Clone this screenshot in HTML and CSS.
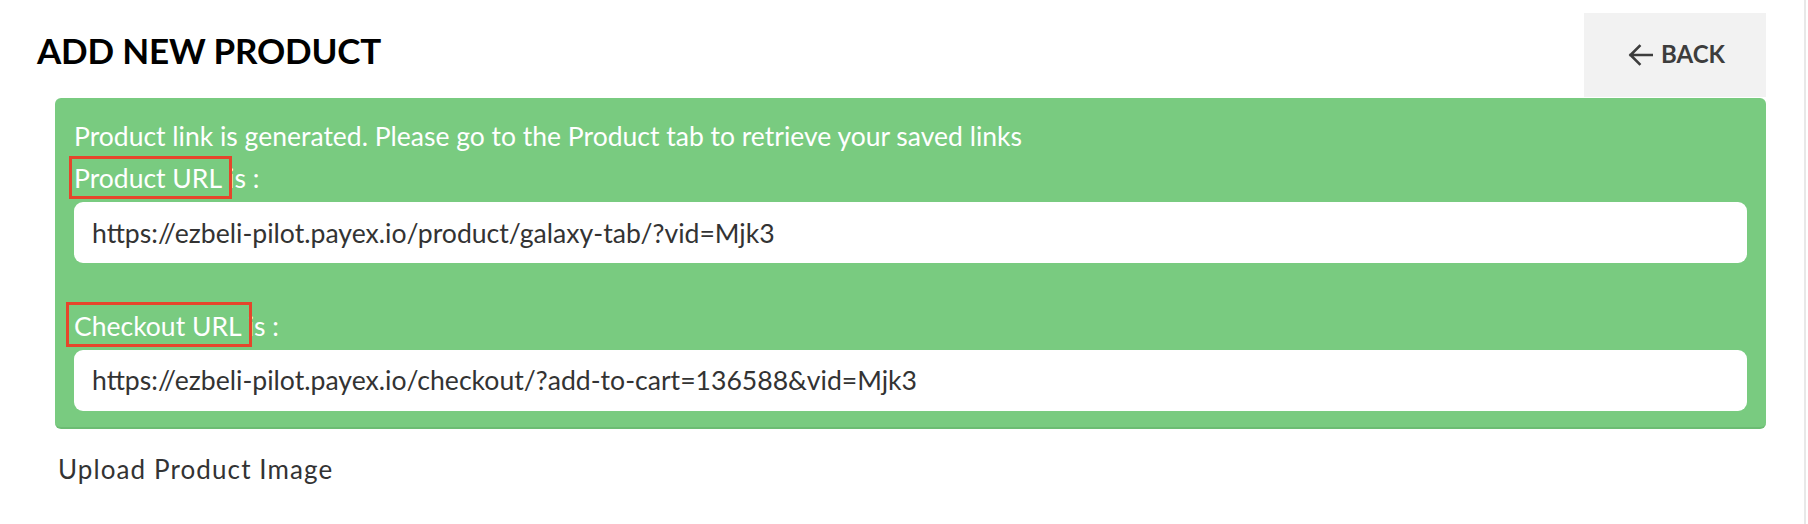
FILE: index.html
```html
<!DOCTYPE html>
<html>
<head>
<meta charset="utf-8">
<link rel="stylesheet" href="styles.css">
</head>
<body>
<div class="page">
  <div class="header">
    <h1 class="title">ADD NEW PRODUCT</h1>
    <button class="back-btn">
      <svg class="back-icon" width="26" height="24" viewBox="0 0 26 24"><path d="M25 12H3.5M12.5 3L3.5 12L12.5 21" fill="none" stroke="#3d3d3d" stroke-width="2.6" stroke-linecap="square"/></svg>
      <span>BACK</span>
    </button>
  </div>
  <div class="alert">
    <div class="alert-msg">Product link is generated. Please go to the Product tab to retrieve your saved links</div>
    <div class="field">
      <div class="label"><span class="mark mark-1">Product URL </span>is :</div>
      <div class="url-box">https://ezbeli-pilot.payex.io/product/galaxy-tab/?vid=Mjk3</div>
    </div>
    <div class="field field-2">
      <div class="label"><span class="mark mark-2">Checkout URL </span>is :</div>
      <div class="url-box">https://ezbeli-pilot.payex.io/checkout/?add-to-cart=136588&amp;vid=Mjk3</div>
    </div>
  </div>
  <div class="upload-label">Upload Product Image</div>
</div>
</body>
</html>
```

FILE: styles.css
```css
* { box-sizing: border-box; }
html, body { margin: 0; padding: 0; background: #fff; }
body {
  font-family: Lato, "Open Sans", sans-serif;
  color: #333;
  height: 524px;
  overflow: hidden;
}
.page {
  width: 1806px;
  height: 524px;
  border-right: 2px solid #e8e8e8;
  padding: 13px 38px 0 55px;
}
.header {
  display: flex;
  justify-content: space-between;
  align-items: flex-start;
  height: 85px;
}
.title {
  margin: 20px 0 0 -18px;
  font-size: 35px;
  font-weight: 700;
  color: #000;
  line-height: 1;
  letter-spacing: -0.2px;
}
.back-btn {
  width: 182px;
  height: 84px;
  background: #f2f2f2;
  border: none;
  display: flex;
  align-items: center;
  justify-content: center;
  gap: 8px;
  font-family: Lato, sans-serif;
  font-weight: 700;
  font-size: 24px;
  color: #3d3d3d;
  padding: 0 0 0 2px;
}
.back-btn span { margin-top: -3px; }
.back-icon { display: block; }
.alert {
  background: #79cb80;
  border-radius: 6px;
  border-bottom: 2px solid #6cbc73;
  padding: 20px 19px 0 19px;
  color: #fff;
  height: 331px;
}
.alert-msg {
  font-size: 26.5px;
  line-height: 36px;
}
.label {
  font-size: 26.5px;
  line-height: 36px;
  margin: 6px 0 6px 0;
}
.field-2 .label { margin: 45px 0 5.5px 0; }
.mark { position: relative; }
.mark::after {
  content: "";
  position: absolute;
  border: 3px solid #e5452b;
}
.mark-1::after { left: -5px; right: -4px; top: -5.7px; bottom: -5px; }
.mark-2::after { left: -8px; right: -4px; top: -8px; bottom: -5px; }
.url-box {
  background: #fff;
  border-radius: 9px;
  height: 61px;
  display: flex;
  align-items: center;
  padding-left: 18px;
  font-size: 26.6px;
  color: #333;
}
.upload-label {
  margin: 22px 0 0 3px;
  font-size: 26px;
  line-height: 36px;
  color: #333;
  letter-spacing: 1.1px;
}
```
